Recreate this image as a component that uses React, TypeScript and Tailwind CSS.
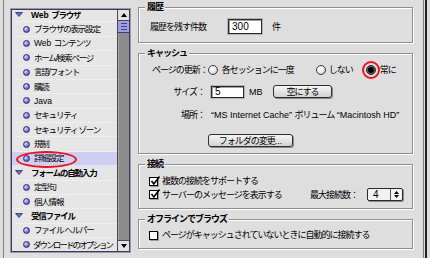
import React from 'react';

type Item = { label: React.ReactNode; header?: boolean; selected?: boolean; tight?: boolean };

const items: Item[] = [
  { label: <><span className="tracking-normal">Web </span>ブラウザ</>, header: true },
  { label: 'ブラウザの表示設定' },
  { label: <><span className="tracking-normal">Web </span>コンテンツ</> },
  { label: 'ホーム/検索ページ' },
  { label: '言語/フォント' },
  { label: '購読' },
  { label: <span className="tracking-normal">Java</span> },
  { label: 'セキュリティ' },
  { label: 'セキュリティ ゾーン' },
  { label: '規制' },
  { label: '詳細設定', selected: true },
  { label: 'フォームの自動入力', header: true },
  { label: '定型句' },
  { label: '個人情報' },
  { label: '受信ファイル', header: true },
  { label: 'ファイル ヘルパー' },
  { label: 'ダウンロードのオプション', tight: true },
];

const etched = 'border border-[#8e8e8e] shadow-[inset_1px_1px_0_#ffffff,1px_1px_0_#ffffff]';

function Bullet() {
  return (
    <span className="w-[7px] h-[7px] shrink-0 rounded-full border border-[#2e2e66] bg-[radial-gradient(circle_at_35%_35%,#e0e0ff_0%,#7474dc_55%,#3c3c9c_100%)]" />
  );
}

function Disclosure() {
  return (
    <svg width="8" height="5" viewBox="0 0 8 5" className="shrink-0">
      <polygon points="0.5,0.5 7.5,0.5 4,4.5" fill="#6c6cc0" stroke="#2e2e66" strokeWidth="0.8" />
    </svg>
  );
}

function Radio({ checked }: { checked?: boolean }) {
  return (
    <span
      className={
        checked
          ? 'w-[10px] h-[10px] shrink-0 rounded-full border border-[#2a2a2a] bg-[#6a6a6a] flex items-center justify-center'
          : 'w-[10px] h-[10px] shrink-0 rounded-full border border-[#3a3a3a] bg-[radial-gradient(circle_at_35%_35%,#ffffff_0%,#ececec_50%,#a4a4a4_100%)]'
      }
    >
      {checked && <span className="w-[6px] h-[6px] rounded-full bg-black" />}
    </span>
  );
}

function Check({ checked }: { checked?: boolean }) {
  return (
    <span className="relative w-[9px] h-[9px] shrink-0 border border-black bg-white shadow-[1px_1px_0_#9a9a9a]">
      {checked && (
        <svg viewBox="0 0 10 10" className="absolute -top-[2px] left-0 w-[10px] h-[10px]">
          <path d="M1.5 5 L3.8 8 L9.5 0.5" fill="none" stroke="#000" strokeWidth="1.6" />
        </svg>
      )}
    </span>
  );
}

function Button({ children, className }: { children: React.ReactNode; className: string }) {
  return (
    <span
      className={
        'flex items-center justify-center rounded-[3px] border border-[#2e2e2e] bg-[linear-gradient(#f6f6f6,#d2d2d2)] shadow-[1px_1px_0_#8a8a8a] ' +
        className
      }
    >
      {children}
    </span>
  );
}

function Field({ children, className }: { children: React.ReactNode; className: string }) {
  return (
    <span
      className={
        'flex items-center bg-white border border-[#2a2a2a] shadow-[0_0_0_1px_#b4b4b4,inset_1px_1px_0_#a0a0a0] pl-[3px] tracking-normal text-[10px] ' +
        className
      }
    >
      {children}
    </span>
  );
}

function ListPane() {
  return (
    <div className="ml-[6px] mt-[8px] w-[121px] h-[245px] border border-[#9a9a9a]">
      <div className="w-full h-full border border-[#3a3a6c] flex">
        <div className="flex-1 bg-[#e6e6e6] overflow-hidden text-[8.5px] tracking-[-1.2px]">
          <div className="-mt-[2px]">
            {items.map((it, i) => (
              <div
                key={i}
                className={
                  (it.selected ? 'bg-[#cfcff4] ' : '') +
                  'relative h-[14.375px] flex items-center border-b border-dotted border-[#f6f6f6]'
                }
              >
                {it.header ? (
                  <>
                    <span className="ml-[3px]">
                      <Disclosure />
                    </span>
                    <span className="ml-[8px] font-bold whitespace-nowrap">{it.label}</span>
                  </>
                ) : (
                  <>
                    <span className="ml-[11px] flex">
                      <Bullet />
                    </span>
                    <span className={it.tight ? 'ml-[3px] whitespace-nowrap tracking-[-1.9px]' : 'ml-[4px] whitespace-nowrap'}>
                      {it.label}
                    </span>
                  </>
                )}
                {it.selected && (
                  <span className="absolute left-[4px] -top-[1px] w-[61px] h-[17px] rounded-[50%] border-2 border-[#e8161e]" />
                )}
              </div>
            ))}
          </div>
        </div>
        <div className="w-[12px] flex flex-col border-l border-[#4a4a4a]">
          <div className="h-[11px] bg-[#e2e2e2] border-b border-[#4a4a4a] flex items-center justify-center">
            <svg width="6" height="4" viewBox="0 0 6 4">
              <polygon points="3,0 6,4 0,4" fill="#000" />
            </svg>
          </div>
          <div className="h-[12px] bg-[#9e9ee0] border-b border-[#3c3c88] flex flex-col items-center justify-center gap-[2px]">
            <span className="w-[6px] h-[1px] bg-[#44448c]" />
            <span className="w-[6px] h-[1px] bg-[#44448c]" />
            <span className="w-[6px] h-[1px] bg-[#44448c]" />
          </div>
          <div className="flex-1 bg-[#8c8c8c] border-l border-[#a6a6a6]" />
          <div className="h-[11px] bg-[#e2e2e2] border-t border-[#4a4a4a] flex items-center justify-center">
            <svg width="6" height="4" viewBox="0 0 6 4">
              <polygon points="0,0 6,0 3,4" fill="#000" />
            </svg>
          </div>
        </div>
      </div>
    </div>
  );
}

function Legend({ children }: { children: React.ReactNode }) {
  return <legend className="ml-[6px] px-[2px] font-bold leading-[11px] bg-[#dedede]">{children}</legend>;
}

function Settings() {
  return (
    <div className="ml-[7px] w-[275px] pt-[2px] flex flex-col gap-[5px]">
      <fieldset className={'h-[41px] ' + etched}>
        <Legend>履歴</Legend>
        <div className="mt-[6px] h-[15px] pl-[11px] flex items-center">
          <span>履歴を残す件数</span>
          <Field className="ml-[22px] w-[34px] h-[15px]">300</Field>
          <span className="ml-[10px]">件</span>
        </div>
      </fieldset>

      <fieldset className={'h-[106px] ' + etched}>
        <Legend>キャッシュ</Legend>
        <div className="mt-[4px] h-[14px] pl-[13px] flex items-center">
          <span>ページの更新：</span>
          <Radio />
          <span className="ml-[4px]">各セッションに一度</span>
          <span className="ml-[22px] flex">
            <Radio />
          </span>
          <span className="ml-[3px]">しない</span>
          <span className="relative ml-[13px] flex">
            <Radio checked />
            <span className="absolute -left-[4px] -top-[4px] w-[18px] h-[18px] rounded-full border-2 border-[#e8161e]" />
          </span>
          <span className="ml-[4px]">常に</span>
        </div>
        <div className="mt-[7px] h-[15px] flex items-center">
          <span className="w-[66px] text-right">サイズ：</span>
          <Field className="ml-[6px] w-[33px] h-[12px]">5</Field>
          <span className="ml-[5px] w-[13px] tracking-normal">MB</span>
          <Button className="ml-[11px] w-[59px] h-[13px]">空にする</Button>
        </div>
        <div className="mt-[10px] h-[12px] flex items-center">
          <span className="w-[66px] text-right">場所：</span>
          <span className="ml-[6px] whitespace-nowrap">
            <span className="tracking-normal">“MS Internet Cache” </span>ボリューム
            <span className="tracking-normal"> “Macintosh HD”</span>
          </span>
        </div>
        <div className="mt-[13px] flex">
          <Button className="ml-[69px] w-[85px] h-[13px]">
            フォルダの変更<span className="tracking-normal">...</span>
          </Button>
        </div>
      </fieldset>

      <fieldset className={'h-[50px] ' + etched}>
        <Legend>接続</Legend>
        <div className="mt-[5px] h-[12px] pl-[10px] flex items-center">
          <Check checked />
          <span className="ml-[4px]">複数の接続をサポートする</span>
        </div>
        <div className="mt-[1px] h-[13px] pl-[10px] pr-[9px] flex items-center">
          <Check checked />
          <span className="ml-[4px]">サーバーのメッセージを表示する</span>
          <span className="ml-auto">最大接続数：</span>
          <span className="ml-[9px] w-[36px] h-[13px] flex rounded-[2px] border border-[#2a2a2a] bg-[#f2f2f2] shadow-[1px_1px_0_#8a8a8a]">
            <span className="flex-1 pl-[5px] tracking-normal text-[10px] leading-[11px]">4</span>
            <span className="w-[12px] border-l border-[#5a5a5a] flex flex-col items-center justify-center gap-[1px]">
              <svg width="5" height="3" viewBox="0 0 5 3">
                <polygon points="2.5,0 5,3 0,3" fill="#000" />
              </svg>
              <svg width="5" height="3" viewBox="0 0 5 3">
                <polygon points="0,0 5,0 2.5,3" fill="#000" />
              </svg>
            </span>
          </span>
        </div>
      </fieldset>

      <fieldset className={'h-[35px] ' + etched}>
        <Legend>オフラインでブラウズ</Legend>
        <div className="mt-[4px] h-[12px] pl-[10px] flex items-center">
          <Check />
          <span className="ml-[4px]">ページがキャッシュされていないときに自動的に接続する</span>
        </div>
      </fieldset>
    </div>
  );
}

export default function App() {
  return (
    <div className="w-[430px] h-[258px] overflow-hidden bg-[#dedede] flex text-black text-[9px] leading-[12px] tracking-[-1px] font-['Liberation_Sans','Noto_Sans_CJK_JP',sans-serif]">
      <div className="w-[3px]" />
      <div className="w-[421px] border-l border-r border-[#808080] flex items-start">
        <ListPane />
        <Settings />
      </div>
      <div className="w-[1px]" />
      <div className="w-[2px] bg-[#222222]" />
      <div className="flex-1" />
    </div>
  );
}
